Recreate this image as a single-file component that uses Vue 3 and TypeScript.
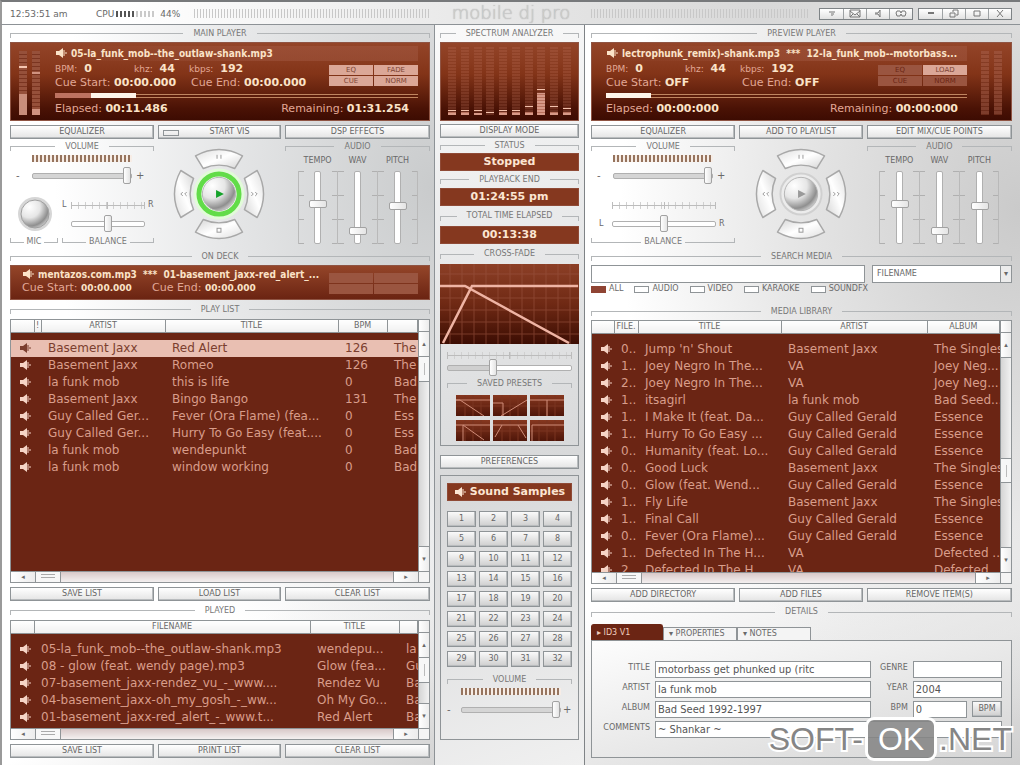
<script setup lang="ts">
import { ref } from 'vue'

interface Deck {
  id: string
  name: string
  track: string
  cue: string
  elapsed: string
  remaining: string
  flags: { label: string; lit: boolean }[]
  actions: string[]
  played: number
  playing: boolean
  mic: boolean
}

const decks: Deck[] = [
  {
    id: 'main',
    name: 'MAIN PLAYER',
    track: '05-la_funk_mob--the_outlaw-shank.mp3',
    cue: '00:00.000',
    elapsed: '00:11.486',
    remaining: '01:31.254',
    flags: [
      { label: 'EQ', lit: true },
      { label: 'FADE', lit: true },
      { label: 'CUE', lit: true },
      { label: 'NORM', lit: true },
    ],
    actions: ['EQUALIZER', 'START VIS', 'DSP EFFECTS'],
    played: 10,
    playing: true,
    mic: true,
  },
  {
    id: 'preview',
    name: 'PREVIEW PLAYER',
    track: 'lectrophunk_remix)-shank.mp3  ***  12-la_funk_mob--motorbass...',
    cue: 'OFF',
    elapsed: '00:00:000',
    remaining: '00:00:000',
    flags: [
      { label: 'EQ', lit: false },
      { label: 'LOAD', lit: true },
      { label: 'CUE', lit: false },
      { label: 'NORM', lit: false },
    ],
    actions: ['EQUALIZER', 'ADD TO PLAYLIST', 'EDIT MIX/CUE POINTS'],
    played: 0,
    playing: false,
    mic: false,
  },
]

const playlist = [
  ['Basement Jaxx', 'Red Alert', '126', 'The'],
  ['Basement Jaxx', 'Romeo', '126', 'The'],
  ['la funk mob', 'this is life', '0', 'Bad'],
  ['Basement Jaxx', 'Bingo Bango', '131', 'The'],
  ['Guy Called Ger...', 'Fever (Ora Flame) (fea...', '0', 'Ess'],
  ['Guy Called Ger...', 'Hurry To Go Easy (feat....', '0', 'Ess'],
  ['la funk mob', 'wendepunkt', '0', 'Bad'],
  ['la funk mob', 'window working', '0', 'Bad'],
]

const history = [
  ['05-la_funk_mob--the_outlaw-shank.mp3', 'wendepu...', 'la'],
  ['08 - glow (feat. wendy page).mp3', 'Glow (fea...', 'Gu'],
  ['07-basement_jaxx-rendez_vu_-_www....', 'Rendez Vu', 'Ba'],
  ['04-basement_jaxx-oh_my_gosh_-_ww...', 'Oh My Go...', 'Ba'],
  ['01-basement_jaxx-red_alert_-_www.t...', 'Red Alert', 'Ba'],
]

const library = [
  ['0..', "Jump 'n' Shout", 'Basement Jaxx', 'The Singles'],
  ['1..', 'Joey Negro In The...', 'VA', 'Joey Neg...'],
  ['2..', 'Joey Negro In The...', 'VA', 'Joey Neg...'],
  ['1..', 'itsagirl', 'la funk mob', 'Bad Seed...'],
  ['1..', 'I Make It (feat. Da...', 'Guy Called Gerald', 'Essence'],
  ['1..', 'Hurry To Go Easy ...', 'Guy Called Gerald', 'Essence'],
  ['0..', 'Humanity (feat. Lo...', 'Guy Called Gerald', 'Essence'],
  ['0..', 'Good Luck', 'Basement Jaxx', 'The Singles'],
  ['0..', 'Glow (feat. Wend...', 'Guy Called Gerald', 'Essence'],
  ['1..', 'Fly Life', 'Basement Jaxx', 'The Singles'],
  ['1..', 'Final Call', 'Guy Called Gerald', 'Essence'],
  ['0..', 'Fever (Ora Flame)...', 'Guy Called Gerald', 'Essence'],
  ['1..', 'Defected In The H...', 'VA', 'Defected ...'],
  ['2..', 'Defected In The H...', 'VA', 'Defected'],
]

const filters = ['ALL', 'AUDIO', 'VIDEO', 'KARAOKE', 'SOUNDFX']
const filter = ref('ALL')
const selected = ref(0)

const bars = [
  { level: 3, peak: 5 },
  { level: 3, peak: 5 },
  { level: 2, peak: 5 },
  { level: 0, peak: 3 },
  { level: 3, peak: 5 },
  { level: 3, peak: 5 },
  { level: 3, peak: 9 },
  { level: 22, peak: 26 },
  { level: 3, peak: 9 },
  { level: 3, peak: 7 },
]

const presets = [
  'M0 5L4 5L28 21M0 5H34',
  'M0 8H10V21M8 21L34 5',
  'M0 5H34M17 5V21',
  'M0 5H34M7 21V5M7 5L28 20',
  'M0 5H34M2 17L9 5M25 5L33 18',
  'M2 21V5H34',
]

const statuses = [
  { label: 'STATUS', value: 'Stopped' },
  { label: 'PLAYBACK END', value: '01:24:55 pm' },
  { label: 'TOTAL TIME ELAPSED', value: '00:13:38' },
]

const faders = [
  { label: 'TEMPO', value: 55 },
  { label: 'WAV', value: 12 },
  { label: 'PITCH', value: 53 },
]

const transport = ['Pause', 'Rewind', 'Play', 'Forward', 'Stop']
</script>

<template>
  <div class="shell">
    <svg class="symbols" width="0" height="0" aria-hidden="true">
      <symbol id="speaker" viewBox="0 0 12 12">
        <path d="M1 4H4L8 1V11L4 8H1Z" fill="currentColor" />
        <path d="M9 3V9M11 5V7" stroke="currentColor" stroke-width="1" fill="none" />
      </symbol>
      <radialGradient id="ball" cx="0.3" cy="0.25" r="0.85">
        <stop offset="0" stop-color="#ffffff" />
        <stop offset="0.45" stop-color="#e6e6e6" />
        <stop offset="0.8" stop-color="#8f8f8f" />
        <stop offset="1" stop-color="#dcdcdc" />
      </radialGradient>
      <linearGradient id="segment" x1="0" y1="0" x2="1" y2="1">
        <stop offset="0" stop-color="#dedede" />
        <stop offset="0.5" stop-color="#ffffff" />
        <stop offset="1" stop-color="#d4d4d4" />
      </linearGradient>
    </svg>

    <header class="topbar">
      <div class="topbar-side">
        <span class="clock">12:53:51 am</span>
        <span class="cpu">CPU<i class="cpu-bars"></i><span>44%</span></span>
        <i class="hatch"></i>
      </div>
      <h1 class="brand">mobile dj pro</h1>
      <div class="topbar-side right">
        <i class="hatch"></i>
        <div class="win-group">
          <button aria-label="Help"><svg viewBox="0 0 16 9"><path d="M5 3H11M7 5H10M8 6V7" /></svg></button>
          <button aria-label="Mail"><svg viewBox="0 0 16 9"><path d="M3 1H13V8H3ZM3 2L8 6L13 2M3 8L6 5M13 8L10 5" /></svg></button>
          <button aria-label="Sound"><svg viewBox="0 0 16 9"><path d="M5 4H8L10 1V8L8 5H5" /></svg></button>
          <button aria-label="Link"><svg viewBox="0 0 16 9"><path d="M4 2H7L8 4L9 2H12L13 4L12 7H9L8 5L7 7H4L3 4Z" /></svg></button>
        </div>
        <div class="win-group">
          <button aria-label="Minimize"><svg viewBox="0 0 16 9"><path d="M5 4H11" stroke-width="2" /></svg></button>
          <button aria-label="Restore"><svg viewBox="0 0 16 9"><path d="M4 4H9V8H4ZM7 3V1H12V6H10" /></svg></button>
          <button aria-label="Maximize"><svg viewBox="0 0 16 9"><path d="M5 2H11V7H5Z" /></svg></button>
          <button aria-label="Close"><svg viewBox="0 0 16 9"><path d="M5 1L11 8M11 1L5 8" /></svg></button>
        </div>
      </div>
    </header>

    <main class="columns">
      <section v-for="deck in decks" :key="deck.id" class="column" :class="deck.id">
        <h2 class="legend">{{ deck.name }}</h2>
        <div class="lcd deck-lcd" :class="{ mirrored: !deck.mic }">
          <div class="vu" :class="{ live: deck.playing }"><i></i><i></i></div>
          <div class="deck-info">
            <p class="track"><svg class="spk"><use href="#speaker" /></svg>{{ deck.track }}</p>
            <div class="info-mid">
              <div class="info-rows">
                <p class="stats"><span>BPM: <b>0</b></span><span>khz: <b>44</b></span><span>kbps: <b>192</b></span></p>
                <p class="cues"><span>Cue Start: <b>{{ deck.cue }}</b></span><span>Cue End: <b>{{ deck.cue }}</b></span></p>
              </div>
              <div class="flags">
                <button v-for="flag in deck.flags" :key="flag.label" :class="{ lit: flag.lit }">{{ flag.label }}</button>
              </div>
            </div>
            <div class="progress"><i class="done" :style="{ width: deck.played + '%' }"></i><i class="head"></i></div>
            <p class="times"><span>Elapsed: <b>{{ deck.elapsed }}</b></span><span>Remaining: <b>{{ deck.remaining }}</b></span></p>
          </div>
        </div>

        <div class="trio">
          <button v-for="(action, n) in deck.actions" :key="action" class="btn">
            <i v-if="deck.mic && n === 1" class="lamp"></i>{{ action }}
          </button>
        </div>

        <div class="controls">
          <div class="levels">
            <h3 class="legend short">VOLUME</h3>
            <i class="meter"></i>
            <div class="slider-row">
              <span>-</span><input class="range filled" type="range" value="100" :aria-label="deck.name + ' volume'" /><span>+</span>
            </div>
            <div class="lower">
              <div v-if="deck.mic" class="mic">
                <button class="knob" aria-label="Microphone">
                  <svg viewBox="0 0 36 40"><circle cx="18" cy="20" r="17" fill="#d6d6d6" /><circle cx="18" cy="20" r="14" fill="url(#ball)" stroke="#a0a0a0" /></svg>
                </button>
                <h3 class="legend foot">MIC</h3>
              </div>
              <div class="balance">
                <div class="balance-grid" :class="{ compact: deck.mic }">
                  <span>L</span><i class="ruler"></i><span>R</span>
                  <input class="range" type="range" value="50" :aria-label="deck.name + ' balance'" />
                </div>
                <h3 class="legend foot">BALANCE</h3>
              </div>
            </div>
          </div>

          <div class="dial">
            <svg class="dial-art" viewBox="0 0 96 96" aria-hidden="true">
              <g fill="url(#segment)" stroke="#a8a8a8" stroke-width="1.5" stroke-linejoin="round">
                <path d="M24 9Q48 -4 72 9L64 22Q48 15 32 22Z" />
                <path d="M24 9Q48 -4 72 9L64 22Q48 15 32 22Z" transform="rotate(90 48 48)" />
                <path d="M24 9Q48 -4 72 9L64 22Q48 15 32 22Z" transform="rotate(180 48 48)" />
                <path d="M24 9Q48 -4 72 9L64 22Q48 15 32 22Z" transform="rotate(270 48 48)" />
              </g>
              <g v-if="deck.playing">
                <circle cx="48" cy="48" r="26" fill="#e2fbd9" />
                <circle cx="48" cy="48" r="20.5" fill="#fff" stroke="#62dc49" stroke-width="5" />
              </g>
              <circle v-else cx="48" cy="48" r="21" fill="#ececec" stroke="#d0d0d0" stroke-width="2" />
              <circle cx="48" cy="48" r="17" fill="url(#ball)" stroke="#b5b5b5" />
              <path d="M45 44L53 48L45 52Z" :fill="deck.playing ? '#16a32b' : '#9a9a9a'" />
              <g fill="none" stroke="#999">
                <path d="M46 8V12M50 8V12" />
                <rect x="46" y="83" width="4" height="4" />
                <path d="M11 46L9 48L11 50M15 46L13 48L15 50M81 46L83 48L81 50M85 46L87 48L85 50" />
              </g>
            </svg>
            <div class="dial-buttons">
              <button v-for="t in transport" :key="t" :class="t.toLowerCase()" :aria-label="t"></button>
            </div>
          </div>

          <div class="audio">
            <h3 class="legend short">AUDIO</h3>
            <div class="faders">
              <i class="scale first"></i>
              <template v-for="(fader, n) in faders" :key="fader.label">
                <label class="fader"><span>{{ fader.label }}</span><input class="range upright" type="range" :value="fader.value" /></label>
                <i class="scale" :class="{ last: n === 2 }"></i>
              </template>
            </div>
          </div>
        </div>

        <template v-if="deck.id === 'main'">
          <h2 class="legend">ON DECK</h2>
          <div class="lcd ondeck">
            <div>
              <p class="track"><svg class="spk"><use href="#speaker" /></svg>mentazos.com.mp3&nbsp; *** &nbsp;01-basement_jaxx-red_alert_...</p>
              <p class="next-cues"><span>Cue Start: <b>00:00.000</b></span><span>Cue End: <b>00:00.000</b></span></p>
            </div>
            <div class="flags blank"><i></i><i></i><i></i><i></i></div>
          </div>

          <h2 class="legend tall">PLAY LIST</h2>
          <div class="list grow">
            <div class="pane">
              <table>
                <colgroup><col class="w-icon" /><col class="w-mark" /><col class="w-artist" /><col class="w-title" /><col class="w-bpm" /><col /></colgroup>
                <thead><tr><th></th><th>!</th><th>ARTIST</th><th>TITLE</th><th>BPM</th><th></th></tr></thead>
                <tbody>
                  <tr v-for="(row, n) in playlist" :key="n" :class="{ selected: n === selected }" @click="selected = n">
                    <td colspan="2"><svg class="spk"><use href="#speaker" /></svg></td>
                    <td v-for="(cell, c) in row" :key="c">{{ cell }}</td>
                  </tr>
                </tbody>
              </table>
            </div>
            <div class="vbar"><i class="cap"></i><button aria-label="Scroll up">▴</button><i class="thumb"></i><i class="track-fill"></i><button aria-label="Scroll down">▾</button></div>
            <div class="hbar"><button aria-label="Scroll left">◂</button><i class="thumb"></i><i class="track-fill"></i><button aria-label="Scroll right">▸</button></div>
            <i class="corner"></i>
          </div>
          <div class="trio">
            <button class="btn">SAVE LIST</button><button class="btn">LOAD LIST</button><button class="btn">CLEAR LIST</button>
          </div>

          <h2 class="legend tall">PLAYED</h2>
          <div class="list history">
            <div class="pane">
              <table>
                <colgroup><col class="w-icon" /><col class="w-file" /><col class="w-short" /><col /></colgroup>
                <thead><tr><th></th><th>FILENAME</th><th>TITLE</th><th></th></tr></thead>
                <tbody>
                  <tr v-for="(row, n) in history" :key="n">
                    <td><svg class="spk"><use href="#speaker" /></svg></td>
                    <td v-for="(cell, c) in row" :key="c">{{ cell }}</td>
                  </tr>
                </tbody>
              </table>
            </div>
            <div class="vbar"><i class="cap"></i><button aria-label="Scroll up">▴</button><i class="thumb"></i><i class="track-fill"></i><button aria-label="Scroll down">▾</button></div>
            <div class="hbar"><button aria-label="Scroll left">◂</button><i class="thumb"></i><i class="track-fill"></i><button aria-label="Scroll right">▸</button></div>
            <i class="corner"></i>
          </div>
          <div class="trio">
            <button class="btn">SAVE LIST</button><button class="btn">PRINT LIST</button><button class="btn">CLEAR LIST</button>
          </div>
        </template>

        <template v-else>
          <h2 class="legend">SEARCH MEDIA</h2>
          <div class="search">
            <input class="box" type="text" aria-label="Search media" />
            <div class="picker">
              <select class="box" aria-label="Search field"><option>FILENAME</option></select>
              <span aria-hidden="true">▾</span>
            </div>
          </div>
          <div class="filters">
            <label v-for="f in filters" :key="f"><input v-model="filter" type="radio" name="filter" :value="f" />{{ f }}</label>
          </div>

          <h2 class="legend">MEDIA LIBRARY</h2>
          <div class="list grow">
            <div class="pane">
              <table>
                <colgroup><col class="w-lead" /><col class="w-num" /><col class="w-lib" /><col class="w-who" /><col /></colgroup>
                <thead><tr><th></th><th>FILE.</th><th>TITLE</th><th>ARTIST</th><th>ALBUM</th></tr></thead>
                <tbody>
                  <tr v-for="(row, n) in library" :key="n">
                    <td><svg class="spk"><use href="#speaker" /></svg></td>
                    <td v-for="(cell, c) in row" :key="c">{{ cell }}</td>
                  </tr>
                </tbody>
              </table>
            </div>
            <div class="vbar"><i class="cap"></i><button aria-label="Scroll up">▴</button><i class="track-fill"></i><i class="thumb"></i><i class="track-fill after"></i><button aria-label="Scroll down">▾</button></div>
            <div class="hbar"><button aria-label="Scroll left">◂</button><i class="thumb"></i><i class="track-fill"></i><button aria-label="Scroll right">▸</button></div>
            <i class="corner"></i>
          </div>
          <div class="trio">
            <button class="btn">ADD DIRECTORY</button><button class="btn">ADD FILES</button><button class="btn">REMOVE ITEM(S)</button>
          </div>

          <h2 class="legend tall">DETAILS</h2>
          <div class="tabs">
            <button class="active">▸ ID3 V1</button><button>▾ PROPERTIES</button><button>▾ NOTES</button>
          </div>
          <form class="details" @submit.prevent>
            <label for="f-title">TITLE</label><input id="f-title" class="box" value="motorbass get phunked up (ritc" />
            <label for="f-genre">GENRE</label><input id="f-genre" class="box wide" />
            <label for="f-artist">ARTIST</label><input id="f-artist" class="box" value="la funk mob" />
            <label for="f-year">YEAR</label><input id="f-year" class="box wide" value="2004" />
            <label for="f-album">ALBUM</label><input id="f-album" class="box" value="Bad Seed 1992-1997" />
            <label for="f-bpm">BPM</label><input id="f-bpm" class="box" value="0" /><button class="sample">BPM</button>
            <label for="f-note">COMMENTS</label><input id="f-note" class="box full" value="~ Shankar ~" />
          </form>
        </template>
      </section>

      <section class="column center">
        <h2 class="legend">SPECTRUM ANALYZER</h2>
        <div class="lcd spectrum">
          <div v-for="(bar, n) in bars" :key="n" class="band">
            <i class="peak" :style="{ marginBottom: bar.peak - bar.level - 1 + 'px' }"></i>
            <i class="level" :style="{ height: bar.level + 'px' }"></i>
          </div>
        </div>
        <button class="btn solo">DISPLAY MODE</button>
        <template v-for="(s, n) in statuses" :key="s.label">
          <h2 class="legend" :class="{ short: n === 0, tall: n === 2 }">{{ s.label }}</h2>
          <p class="readout">{{ s.value }}</p>
        </template>
        <h2 class="legend tall">CROSS-FADE</h2>
        <svg class="curve" viewBox="0 0 139 80" preserveAspectRatio="none" aria-hidden="true">
          <defs>
            <linearGradient id="curve-bg" x1="0" y1="0" x2="0" y2="1"><stop offset="0" stop-color="#8c3f26" /><stop offset="0.5" stop-color="#6f2914" /><stop offset="1" stop-color="#3c0d03" /></linearGradient>
          </defs>
          <rect width="139" height="80" fill="url(#curve-bg)" />
          <path d="M10 0V80M22 0V80M34 0V80M46 0V80M58 0V80M70 0V80M82 0V80M94 0V80M106 0V80M118 0V80M130 0V80M0 10H139M0 22H139M0 34H139M0 46H139M0 58H139M0 70H139" stroke="#9a5540" opacity="0.6" />
          <path d="M3 79L32 22H138M0 22H25L129 79" fill="none" stroke="#efb4a4" stroke-width="2.5" />
        </svg>
        <div class="fade-box">
          <i class="ruler"></i>
          <input class="range fade" type="range" value="36" aria-label="Cross-fade" />
          <h3 class="legend short">SAVED PRESETS</h3>
          <div class="presets">
            <button v-for="(p, n) in presets" :key="n" :aria-label="'Preset ' + (n + 1)">
              <svg viewBox="0 0 34 21" preserveAspectRatio="none"><path d="M9 0V21M17 0V21M25 0V21M0 11H34" stroke="#7a3420" /><path :d="p" stroke="#cf8c78" /></svg>
            </button>
          </div>
        </div>
        <button class="btn solo prefs">PREFERENCES</button>
        <div class="samples">
          <h2 class="readout"><svg class="spk"><use href="#speaker" /></svg>Sound Samples</h2>
          <div class="pads"><button v-for="n in 32" :key="n" class="sample">{{ n }}</button></div>
          <h3 class="legend">VOLUME</h3>
          <i class="meter"></i>
          <div class="slider-row">
            <span>-</span><input class="range filled" type="range" value="100" aria-label="Sample volume" /><span>+</span>
          </div>
        </div>
      </section>
    </main>

    <div class="mark"><span>SOFT-</span><b>OK</b><span>.NET</span></div>
  </div>
</template>

<style>
html,
body {
  margin: 0;
}
</style>

<style scoped>
.shell {
  --line: #8d9296;
  --brick: #6b2514;
  --soft: #e2a896;
  position: relative;
  box-sizing: border-box;
  height: 100vh;
  min-height: 760px;
  display: grid;
  grid-template-rows: 25px minmax(0, 1fr);
  font: 8px/10px "DejaVu Sans", sans-serif;
  color: #696969;
  overflow: hidden;
}
.shell * {
  box-sizing: border-box;
}
.symbols {
  position: absolute;
}
h1,
h2,
h3,
p {
  margin: 0;
  font-weight: normal;
  font-size: inherit;
}
button,
input,
select {
  font: inherit;
  color: inherit;
  margin: 0;
  padding: 0;
  border: 0;
  border-radius: 0;
  background: none;
}
i {
  display: block;
}

/* Top bar */
.topbar {
  display: grid;
  grid-template-columns: minmax(0, 1fr) 150px minmax(0, 1fr);
  align-items: center;
  border-top: 2px solid #77797b;
  border-bottom: 1px solid var(--line);
  border-left: 2px solid #9a9a9a;
  background: linear-gradient(90deg, #fff 0 12%, #e6e6e6 50%, #d9d9d9 75%, #dedede);
}
.topbar-side {
  display: flex;
  align-items: center;
  padding: 1px 5px 0 8px;
  font-size: 9px;
}
.clock {
  width: 86px;
}
.cpu {
  display: flex;
  align-items: center;
  width: 98px;
}
.cpu-bars {
  width: 40px;
  height: 6px;
  margin: 0 4px 0 2px;
  background: linear-gradient(90deg, transparent 0 45%, #ffffffb0 45%), repeating-linear-gradient(90deg, #555 0 2px, transparent 2px 4px);
}
.hatch {
  flex: 1;
  height: 9px;
  background: repeating-linear-gradient(90deg, #c8c8c8 0 1px, transparent 1px 3px);
}
.brand {
  text-align: center;
  white-space: nowrap;
  font: 18px/20px "DejaVu Sans Light", "DejaVu Sans", sans-serif;
  color: #d0d0d0;
  text-shadow: 0 0 1px #999;
}
.topbar-side.right {
  padding-right: 8px;
  padding-left: 5px;
}
.win-group {
  display: flex;
  margin-left: 5px;
  border: 1px solid #7e8386;
}
.win-group:nth-child(2) {
  margin-left: 9px;
}
.win-group button {
  width: 23px;
  height: 10px;
  background: linear-gradient(#fff, #e2e2e2);
}
.win-group button:not(:first-child) {
  border-left: 1px solid #9ea2a4;
}
.win-group svg {
  display: block;
  width: 16px;
  height: 9px;
  margin: 0 auto;
  fill: none;
  stroke: #777;
}

/* Columns */
.columns {
  display: grid;
  grid-template-columns: minmax(0, 1fr) 150px minmax(0, 1fr);
  min-height: 0;
}
.column {
  display: flex;
  flex-direction: column;
  grid-row: 1;
  min-height: 0;
  min-width: 0;
}
.main {
  grid-column: 1;
  padding: 0 4px 7px 8px;
  border-left: 2px solid #9a9a9a;
  border-right: 1px solid var(--line);
  background: radial-gradient(ellipse at 100% 22%, #c9cbcc, #e6e7e8 35%, #ffffff00 62%), linear-gradient(150deg, #fff 75%, #d4d4d4);
}
.preview {
  grid-column: 3;
  padding: 0 8px 7px 6px;
  background: radial-gradient(ellipse at 100% 25%, #cacaca, #e8e8e8 40%, #ffffff00 65%), linear-gradient(160deg, #fff 65%, #cfcfcf);
}
.center {
  grid-column: 2;
  padding: 0 5px 25px;
  border-right: 1px solid #7f8386;
  background: linear-gradient(160deg, #fafafa, #e3e4e5 40%, #d8d9da 60%, #f0f0f0);
}

/* Section captions */
.legend {
  flex: none;
  display: flex;
  align-items: center;
  gap: 10px;
  height: 17px;
  font-size: 8px;
  line-height: 10px;
  color: #777;
  white-space: nowrap;
}
.legend::before,
.legend::after {
  content: "";
  flex: 1;
  height: 4px;
  margin-top: 4px;
  border-top: 1px solid #b3b6b8;
}
.legend::before {
  border-left: 1px solid #b3b6b8;
}
.legend::after {
  border-right: 1px solid #b3b6b8;
}
.legend.short {
  height: 15px;
}
.legend.tall {
  height: 20px;
}
.main .legend.tall {
  height: 19px;
}
.legend.foot {
  height: 12px;
  gap: 3px;
}
.legend.foot::before,
.legend.foot::after {
  margin: 0 0 4px;
  border-top: 0;
  border-bottom: 1px solid #b3b6b8;
}

/* Displays */
.lcd {
  flex: none;
  border: 1px solid #8f5443;
  background: linear-gradient(#944529, #833418 40%, #4a1205 85%, #3d0c02);
  color: var(--soft);
}
.lcd b {
  color: #fbe3c8;
}
.deck-lcd {
  display: flex;
  height: 79px;
  padding: 3px 11px 0 8px;
}
.deck-lcd.mirrored {
  flex-direction: row-reverse;
  padding: 3px 8px 0 14px;
}
.vu {
  display: flex;
  gap: 5px;
  width: 36px;
  padding-top: 5px;
}
.mirrored .vu {
  padding-left: 14px;
}
.vu i {
  width: 8px;
  height: 64px;
  background: repeating-linear-gradient(#a25a45 0 3px, #823c27 3px 4px);
  opacity: 0.6;
}
.vu.live i {
  opacity: 1;
  background: linear-gradient(transparent 15px, #f5c5b0 15px 17px, transparent 17px 43px, #c98d7a 43px), repeating-linear-gradient(#96503a 0 3px, #7a3420 3px 4px);
}
.vu.live i + i {
  background: linear-gradient(transparent 21px, #d09280 21px 23px, transparent 23px 58px, #d09280 58px), repeating-linear-gradient(#96503a 0 3px, #7a3420 3px 4px);
}
.deck-info {
  flex: 1;
  min-width: 0;
  font-size: 11px;
  line-height: 13px;
}
.track {
  overflow: hidden;
  font: bold 10px/15px "DejaVu Sans Condensed", "DejaVu Sans", sans-serif;
  color: #fbe3c8;
  white-space: pre;
  background: linear-gradient(90deg, transparent, #a75f4a66 60%);
}
.spk {
  width: 12px;
  height: 12px;
  margin-right: 4px;
  vertical-align: -2px;
}
.info-mid {
  display: flex;
  justify-content: space-between;
  padding-top: 1px;
}
.info-rows {
  white-space: nowrap;
}
.stats {
  display: flex;
  font-size: 9px;
}
.stats b {
  font-size: 11px;
  margin-left: 4px;
}
.stats span {
  width: 55px;
}
.stats span:first-child {
  width: 79px;
}
.cues span {
  display: inline-block;
  width: 136px;
}
.flags {
  flex: none;
  display: grid;
  grid-template-columns: 44px 44px;
  grid-auto-rows: 10px;
  gap: 1px;
  align-self: center;
  font-size: 7px;
  line-height: 10px;
}
.deck-info .flags {
  margin-left: -20px;
}
.flags button,
.flags i {
  background: #9a5540;
  color: #6b2514;
}
.flags .lit {
  background: #dba797;
  color: #7b4434;
}
.progress {
  display: flex;
  height: 5px;
  margin: 4px 0;
  background: linear-gradient(transparent 1px, #c08560 1px 2px, #5c1c0a 2px 4px, #c08560 4px);
}
.done {
  background: #bd7260;
}
.head {
  width: 45px;
  background: #fff5ea;
}
.times {
  display: flex;
  justify-content: space-between;
  padding-right: 9px;
}
.ondeck {
  display: flex;
  justify-content: space-between;
  height: 35px;
  padding: 2px 11px 0;
  background: linear-gradient(#944529, #6b2412);
}
.ondeck .track {
  background: none;
  line-height: 14px;
}
.next-cues {
  font-size: 11px;
  line-height: 12px;
  white-space: nowrap;
}
.next-cues span {
  display: inline-block;
  width: 130px;
}
.next-cues b {
  font-size: 9px;
}

/* Buttons */
.trio {
  flex: none;
  display: grid;
  grid-template-columns: 145fr 124fr 146fr;
  gap: 4px;
  margin-top: 4px;
}
.btn,
.sample {
  border: 1px solid #8f9497;
  box-shadow: inset -1px -1px #b9bcbe;
  background: linear-gradient(#fff, #e4e4e4);
  color: #666;
}
.sample {
  height: 16px;
  background: linear-gradient(#fafafa, #cecece);
}
.btn {
  height: 14px;
  font-size: 8px;
  line-height: 10px;
  white-space: nowrap;
}
.btn.solo {
  flex: none;
  margin-top: 3px;
}
.lamp {
  float: left;
  width: 16px;
  height: 6px;
  margin: 3px 0 0 4px;
  border: 1px solid #8f9497;
}

/* Deck controls */
.controls {
  flex: none;
  display: grid;
  grid-template-columns: 145fr 124fr 146fr;
  gap: 4px;
  height: 109px;
}
.levels,
.audio {
  min-width: 0;
}
.meter {
  width: 100px;
  height: 7px;
  margin: 1px auto 0 22px;
  background: repeating-linear-gradient(90deg, #96745e 0 2px, #f7ede6 2px 4px);
}
.slider-row {
  display: grid;
  grid-template-columns: 12px 100px 12px;
  column-gap: 4px;
  align-items: center;
  height: 28px;
  padding-left: 6px;
  font-size: 10px;
}
.range {
  appearance: none;
  display: block;
  width: 100%;
  height: 17px;
}
.range::-webkit-slider-runnable-track {
  height: 6px;
  border: 1px solid #b0b0b0;
  border-radius: 2px;
  background: #fff;
}
.range.filled::-webkit-slider-runnable-track {
  background: #d5d5d5;
}
.range.fade::-webkit-slider-runnable-track {
  background: linear-gradient(90deg, #cfcfcf 36%, #fff 36%);
}
.range::-webkit-slider-thumb {
  appearance: none;
  width: 8px;
  height: 17px;
  margin-top: -7px;
  border: 1px solid #a2a2a2;
  border-radius: 2px;
  background: linear-gradient(90deg, #fff, #e4e4e4);
}
.lower {
  display: flex;
  gap: 4px;
  height: 58px;
}
.mic {
  width: 50px;
}
.knob {
  display: block;
  width: 36px;
  height: 44px;
  margin: 2px 0 0 7px;
}
.knob svg {
  display: block;
  width: 36px;
  height: 44px;
}
.balance {
  flex: 1;
}
.balance-grid {
  display: grid;
  grid-template-columns: 10px 104px 10px;
  grid-template-rows: 20px 18px;
  column-gap: 3px;
  align-items: center;
  height: 46px;
  padding: 5px 0 0 8px;
}
.balance-grid.compact {
  grid-template-columns: 6px 74px 6px;
  padding: 5px 0 0;
}
.balance-grid .range {
  grid-column: 2;
  grid-row: 2;
}
.balance-grid:not(.compact) span {
  grid-row: 2;
}
.balance-grid .ruler {
  grid-column: 2;
  grid-row: 1;
}
.ruler {
  height: 7px;
  border: solid #bcbcbc;
  border-width: 0 1px;
  background: linear-gradient(#bcbcbc, #bcbcbc) center / 1px 100% no-repeat, linear-gradient(transparent 3px, #bcbcbc 3px 4px, transparent 4px), repeating-linear-gradient(90deg, transparent 0 6px, #d0d0d0 6px 7px);
}
.dial {
  display: grid;
  place-items: center;
}
.dial-art,
.dial-buttons {
  grid-area: 1 / 1;
  width: 94px;
  height: 94px;
}
.dial-buttons {
  display: grid;
  grid-template: 24px 1fr 24px / 24px 1fr 24px;
}
.dial-buttons .pause {
  grid-area: 1 / 2;
}
.dial-buttons .rewind {
  grid-area: 2 / 1;
}
.dial-buttons .play {
  grid-area: 2 / 2;
  border-radius: 50%;
}
.dial-buttons .forward {
  grid-area: 2 / 3;
}
.dial-buttons .stop {
  grid-area: 3 / 2;
}
.faders {
  display: flex;
  justify-content: center;
  height: 92px;
  padding-top: 2px;
}
.fader {
  display: flex;
  flex-direction: column;
  align-items: center;
  width: 28px;
}
.fader span {
  height: 15px;
}
.range.upright {
  writing-mode: vertical-lr;
  direction: rtl;
  width: 18px;
  height: 73px;
}
.range.upright::-webkit-slider-runnable-track {
  width: 7px;
  height: 73px;
}
.range.upright::-webkit-slider-thumb {
  width: 18px;
  height: 8px;
  margin: 0 0 0 -6px;
}
.scale {
  width: 12px;
  height: 73px;
  margin-top: 15px;
  background: linear-gradient(#b9b9b9, #b9b9b9) center / 1px 100% no-repeat, repeating-linear-gradient(#b0b0b0 0 1px, transparent 1px 24px);
}
.scale.first,
.scale.last {
  width: 6px;
  background-position: left, 0 0;
}
.scale.last {
  background-position: right, 0 0;
}

/* Lists */
.list {
  display: grid;
  grid-template: minmax(0, 1fr) 11px / minmax(0, 1fr) 11px;
  flex: none;
  border: 1px solid #8f9497;
  background: #e8e4e4;
}
.list.grow {
  flex: 1 1 0;
  min-height: 0;
}
.list.history {
  height: 120px;
}
.pane {
  overflow: hidden;
  background: var(--brick);
}
table {
  width: 100%;
  table-layout: fixed;
  border-collapse: collapse;
}
th {
  height: 12px;
  padding: 0;
  overflow: hidden;
  border-right: 1px solid #8f9497;
  border-bottom: 1px solid #8f9497;
  background: linear-gradient(#fff, #f0f0f0);
  font-weight: normal;
  line-height: 10px;
}
tbody::before {
  content: "";
  display: block;
  height: 7px;
}
td {
  height: 17px;
  padding: 0 0 0 7px;
  overflow: hidden;
  font-size: 12px;
  line-height: 17px;
  color: #d99d8b;
  white-space: nowrap;
}
td:first-child {
  color: #f6d4c6;
}
td .spk {
  display: block;
  margin: 0 0 0 1px;
}
tr.selected {
  background: #e9bfb2;
}
tr.selected td {
  color: #7b3e2e;
}
.w-icon {
  width: 23px;
}
.w-lead {
  width: 22px;
}
.w-mark {
  width: 7px;
}
.w-artist {
  width: 124px;
}
.w-title {
  width: 173px;
}
.w-bpm {
  width: 49px;
}
.w-file {
  width: 276px;
}
.w-short {
  width: 89px;
}
.w-num {
  width: 24px;
}
.w-lib {
  width: 143px;
}
.w-who {
  width: 146px;
}
.vbar,
.hbar {
  display: flex;
  font-size: 7px;
  line-height: 9px;
}
.vbar {
  flex-direction: column;
  border-left: 1px solid #8f9497;
}
.hbar {
  border-top: 1px solid #8f9497;
}
.vbar > *,
.hbar > * {
  flex: none;
  background: linear-gradient(90deg, #fff, #ececec);
}
.vbar .cap {
  height: 12px;
  border-bottom: 1px solid #8f9497;
}
.vbar button,
.vbar .thumb {
  height: 25px;
  border-bottom: 1px solid #8f9497;
}
.vbar .thumb {
  background: linear-gradient(#bbb, #bbb) center / 1px 12px no-repeat, #f7f7f7;
}
.vbar button:last-child {
  border-top: 1px solid #8f9497;
  border-bottom: 0;
}
.hbar button,
.hbar .thumb {
  width: 25px;
  border-right: 1px solid #8f9497;
}
.hbar .thumb {
  background: repeating-linear-gradient(#aaa 0 1px, transparent 1px 3px) center / 14px 6px no-repeat, #f7f7f7;
}
.hbar button:last-child {
  border-left: 1px solid #8f9497;
  border-right: 0;
}
.vbar .track-fill {
  flex: 11;
  background: linear-gradient(90deg, #d5d5d5, #f2f2f2);
}
.vbar .track-fill.after {
  flex: 7;
}
.preview .vbar .thumb {
  border-top: 1px solid #8f9497;
}
.hbar .track-fill {
  flex: 1;
  background: linear-gradient(#d8c8c8, #f4f0f0);
}
.corner {
  border: solid #8f9497;
  border-width: 1px 0 0 1px;
  background: #f4f4f4;
}

/* Search */
.box {
  min-width: 0;
  border: 1px solid #8f9497;
  background: #fff;
}
.search {
  flex: none;
  display: grid;
  grid-template-columns: 274fr 140fr;
  gap: 7px;
  height: 18px;
}
.search input {
  font-size: 11px;
}
.picker {
  display: grid;
}
.picker > * {
  grid-area: 1 / 1;
}
.picker select {
  appearance: none;
  padding-left: 4px;
}
.picker span {
  justify-self: end;
  width: 12px;
  border: 1px solid #8f9497;
  background: #ececec;
  text-align: center;
  line-height: 15px;
  pointer-events: none;
}
.filters {
  flex: none;
  display: flex;
  gap: 11px;
  height: 20px;
}
.filters label {
  display: flex;
  align-items: center;
  gap: 3px;
  height: 12px;
}
.filters input {
  appearance: none;
  width: 15px;
  height: 7px;
  border: 1px solid #8f9497;
  background: #fff;
}
.filters input:checked {
  border-color: #8f4433;
  background: #8f4433;
}

/* Details */
.tabs {
  flex: none;
  display: flex;
  align-items: flex-end;
  height: 18px;
}
.tabs button {
  width: 74px;
  height: 13px;
  padding-left: 5px;
  border: 1px solid #8f9497;
  border-bottom: 0;
  background: #f4f4f4;
  text-align: left;
}
.tabs .active {
  width: 72px;
  height: 16px;
  border-color: var(--brick);
  border-radius: 3px 3px 0 0;
  background: var(--brick);
  color: #f0cdbd;
}
.details {
  flex: none;
  display: grid;
  grid-template-columns: 50px minmax(0, 219fr) 32px minmax(0, 55fr) 30px;
  grid-auto-rows: 17px;
  gap: 3px 5px;
  align-items: start;
  height: 118px;
  padding: 20px 9px 0 8px;
  border: 1px solid #8f9497;
  background: linear-gradient(165deg, #fdfdfd, #d6d6d6);
}
.details label {
  line-height: 14px;
  text-align: right;
}
.details .box {
  height: 17px;
  padding-left: 2px;
  font: 11px/15px "DejaVu Sans Condensed", "DejaVu Sans", sans-serif;
  color: #555;
}
.details .wide {
  grid-column: 4 / 6;
}
.details .full {
  grid-column: 2 / 6;
}

/* Centre column */
.spectrum {
  display: grid;
  grid-template-columns: repeat(10, 8px);
  justify-content: space-between;
  height: 79px;
  padding: 4px 7px 5px;
}
.band {
  display: flex;
  flex-direction: column;
  justify-content: flex-end;
  background: repeating-linear-gradient(#b0654f55 0 2px, #8e452f44 2px 3px);
}
.band .peak {
  height: 1px;
  background: #f3c1ac;
}
.band .level {
  background: repeating-linear-gradient(0deg, #d89a88 0 2px, #b9725e 2px 3px);
}
.readout {
  flex: none;
  height: 18px;
  border: 1px solid #8f4a36;
  background: #85381f;
  color: #fce5d2;
  text-align: center;
  font: bold 11px/16px "DejaVu Sans", sans-serif;
}
.curve {
  flex: none;
  width: 100%;
  height: 80px;
}
.fade-box,
.samples {
  border: 1px solid #8f9497;
}
.fade-box {
  flex: none;
  height: 102px;
  padding: 8px 6px 0;
  border-top: 0;
}
.fade-box .legend {
  margin: 0 0 4px;
}
.presets {
  display: grid;
  grid-template-columns: repeat(3, 34px);
  justify-content: center;
  gap: 4px 3px;
}
.presets button {
  height: 21px;
  background: linear-gradient(#86371f, #4f1609);
}
.presets svg {
  display: block;
  width: 34px;
  height: 21px;
  fill: none;
}
.btn.prefs {
  margin: 9px 0 6px;
}
.samples {
  flex: 1;
  min-height: 0;
  padding: 7px 6px 0;
}
.samples .readout .spk {
  vertical-align: -3px;
}
.pads {
  display: grid;
  grid-template-columns: repeat(4, 1fr);
  gap: 4px 3px;
  margin: 10px 0 4px;
}
.samples .meter {
  margin: 0 0 0 14px;
}
.samples .slider-row {
  padding-left: 0;
  column-gap: 2px;
  height: 30px;
}

/* Overlay badge */
.mark {
  position: absolute;
  right: 8px;
  bottom: 4px;
  display: flex;
  align-items: center;
  gap: 2px;
  font: 32px/38px "Liberation Sans", Arial, sans-serif;
  color: #858585;
  pointer-events: none;
}
.mark span {
  -webkit-text-stroke: 4px #fff;
  paint-order: stroke fill;
}
.mark b {
  padding: 0 10px;
  border: 3px solid #fff;
  border-radius: 9px;
  background: #858585e0;
  color: #fff;
  font-weight: normal;
}
</style>
